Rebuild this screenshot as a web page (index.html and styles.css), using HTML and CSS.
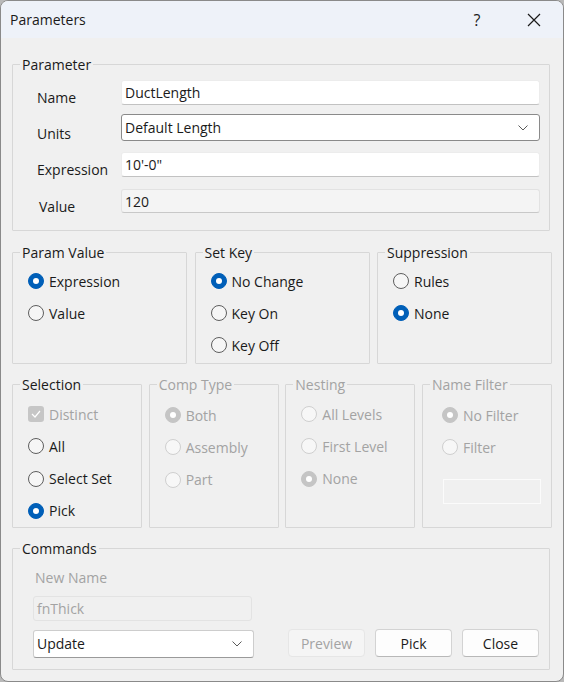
FILE: index.html
```html
<!DOCTYPE html>
<html>
<head>
<meta charset="utf-8">
<link rel="stylesheet" href="styles.css">
</head>
<body>
<div class="window">
  <div class="titlebar">
    <span class="title">Parameters</span>
    <span class="help">?</span>
    <span class="close">
      <svg width="14" height="14" viewBox="0 0 14 14"><path d="M1 1 L13 13 M13 1 L1 13" stroke="#1a1a1a" stroke-width="1.2" fill="none"/></svg>
    </span>
  </div>
  <div class="content">
    <fieldset class="group param">
      <legend>Parameter</legend>
      <div class="form">
        <div class="lbl">Name</div>
        <div class="field h25">DuctLength</div>
        <div class="lbl">Units</div>
        <div class="select h27">Default Length<svg class="chev" width="10" height="6" viewBox="0 0 10 6"><polyline points="0.5,0.5 5,5 9.5,0.5" fill="none" stroke="#5a5a5a" stroke-width="1"/></svg></div>
        <div class="lbl">Expression</div>
        <div class="field h25">10'-0"</div>
        <div class="lbl lbl-value">Value</div>
        <div class="field ro h24">120</div>
      </div>
    </fieldset>

    <div class="row3">
      <fieldset class="group g175">
        <legend>Param Value</legend>
        <div class="opts">
          <div class="opt"><span class="radio on"></span>Expression</div>
          <div class="opt"><span class="radio"></span>Value</div>
        </div>
      </fieldset>
      <fieldset class="group g175">
        <legend>Set Key</legend>
        <div class="opts">
          <div class="opt"><span class="radio on"></span>No Change</div>
          <div class="opt"><span class="radio"></span>Key On</div>
          <div class="opt"><span class="radio"></span>Key Off</div>
        </div>
      </fieldset>
      <fieldset class="group g175">
        <legend>Suppression</legend>
        <div class="opts">
          <div class="opt"><span class="radio"></span>Rules</div>
          <div class="opt"><span class="radio on"></span>None</div>
        </div>
      </fieldset>
    </div>

    <div class="row4">
      <fieldset class="group g130">
        <legend>Selection</legend>
        <div class="opts opts4">
          <div class="opt dis"><span class="check"><svg width="10" height="8" viewBox="0 0 10 8"><polyline points="1,4 4,7 9,1" fill="none" stroke="#fff" stroke-width="1.2"/></svg></span>Distinct</div>
          <div class="opt"><span class="radio"></span>All</div>
          <div class="opt"><span class="radio"></span>Select Set</div>
          <div class="opt"><span class="radio on"></span>Pick</div>
        </div>
      </fieldset>
      <fieldset class="group g130 disabled">
        <legend>Comp Type</legend>
        <div class="opts opts4 down1">
          <div class="opt dis"><span class="radio don"></span>Both</div>
          <div class="opt dis"><span class="radio doff"></span>Assembly</div>
          <div class="opt dis"><span class="radio doff"></span>Part</div>
        </div>
      </fieldset>
      <fieldset class="group g130 disabled">
        <legend>Nesting</legend>
        <div class="opts opts4">
          <div class="opt dis"><span class="radio doff"></span>All Levels</div>
          <div class="opt dis"><span class="radio doff"></span>First Level</div>
          <div class="opt dis"><span class="radio don"></span>None</div>
        </div>
      </fieldset>
      <fieldset class="group g130 disabled nf">
        <legend>Name Filter</legend>
        <div class="opts opts4 down1">
          <div class="opt dis"><span class="radio don"></span>No Filter</div>
          <div class="opt dis"><span class="radio doff"></span>Filter</div>
          <div class="nf-field"></div>
        </div>
      </fieldset>
    </div>

    <fieldset class="group commands">
      <legend>Commands</legend>
      <div class="newname">New Name</div>
      <div class="field dfield">fnThick</div>
      <div class="cmdrow">
        <div class="select sel-update">Update<svg class="chev" width="10" height="6" viewBox="0 0 10 6"><polyline points="0.5,0.5 5,5 9.5,0.5" fill="none" stroke="#5a5a5a" stroke-width="1"/></svg></div>
        <div class="buttons">
          <div class="btn btn-dis">Preview</div>
          <div class="btn">Pick</div>
          <div class="btn">Close</div>
        </div>
      </div>
    </fieldset>
  </div>
</div>
</body>
</html>
```

FILE: styles.css
```css
* { box-sizing: border-box; }
html, body { margin: 0; padding: 0; background: #b9b9b9; }
body {
  font-family: "Open Sans", "Noto Sans", "Liberation Sans", sans-serif;
  font-size: 14px;
  color: #1a1a1a;
}
.window {
  width: 564px;
  height: 682px;
  border: 1px solid #8a8a8a;
  border-radius: 8px;
  overflow: hidden;
  background: #f0f0f0;
  display: flex;
  flex-direction: column;
}
.titlebar {
  height: 37px;
  flex: none;
  background: #eef2f9;
  display: flex;
  align-items: center;
  padding-left: 9px;
}
.title { flex: 1; font-size: 14px; color: #1a1a1a; }
.help { width: 60px; text-align: center; font-size: 16px; color: #1a1a1a; margin-right: 2px; }
.close { width: 54px; display: flex; justify-content: center; align-items: center; padding-right: 4px; }

.content {
  padding: 17px 11px 0 11px;
  display: flex;
  flex-direction: column;
}
.group {
  margin: 0;
  border: 1px solid #d7d7d7;
  border-radius: 1px;
  padding: 0;
  min-width: 0;
}
.group legend {
  padding: 0 2px;
  line-height: 19px;
  font-size: 14px;
  color: #1a1a1a;
}
.group.disabled legend { color: #a3a3a3; }

.param { width: 538px; padding: 6px 9px 17px 24px; }
.param legend { margin-left: -17px; }
.form {
  display: grid;
  grid-template-columns: 84px 1fr;
  grid-template-rows: 25px 36px 36px 36px;
}
.form > :nth-child(3), .form > :nth-child(4) { margin-top: 9px; }
.form > :nth-child(5), .form > :nth-child(6) { margin-top: 11px; }
.form > :nth-child(7), .form > :nth-child(8) { margin-top: 12px; }
.lbl {
  align-self: end;
  line-height: 19px;
  margin-bottom: -2px;
}
.lbl-value { padding-left: 2px; margin-bottom: -3px; }

.field {
  background: #fff;
  border: 1px solid #ececec;
  border-bottom-color: #c2c2c2;
  border-radius: 3px;
  padding: 0 3px;
  display: flex;
  align-items: center;
  line-height: 19px;
  color: #1a1a1a;
}
.h25 { height: 25px; }
.h24 { height: 24px; }
.h27 { height: 27px; }
.field.ro {
  background: #f4f4f4;
  border-color: #e2e2e2;
  border-bottom-color: #c8c8c8;
}
.select {
  background: #fff;
  border: 1px solid #8a8a8a;
  border-radius: 3px;
  padding: 0 11px 0 3px;
  display: flex;
  align-items: center;
  justify-content: space-between;
  line-height: 19px;
}

.row3 {
  margin-top: 12px;
  width: 540px;
  display: flex;
  justify-content: space-between;
  align-items: stretch;
}
.g175 { width: 175px; padding: 9px 4px 8px 15px; }
.g175 legend { margin-left: -8px; }
.opts { display: flex; flex-direction: column; gap: 12px; }
.opt {
  display: flex;
  align-items: center;
  height: 20px;
  line-height: 19px;
  gap: 5px;
  white-space: nowrap;
}
.radio {
  width: 16px;
  height: 16px;
  flex: none;
  border-radius: 50%;
  border: 1px solid #5e5e5e;
  background: #f6f6f6;
  display: flex;
  align-items: center;
  justify-content: center;
}
.radio.on { background: #005fb8; border-color: #005fb8; }
.radio.on::after, .radio.don::after {
  content: "";
  width: 6px;
  height: 6px;
  border-radius: 50%;
  background: #fff;
}
.radio.don { background: #c5c5c5; border-color: #c5c5c5; }
.radio.doff { background: #f7f7f7; border-color: #cfcfcf; }
.check {
  width: 16px;
  height: 16px;
  flex: none;
  border-radius: 3px;
  background: #c6c6c6;
  display: flex;
  align-items: center;
  justify-content: center;
}
.opt.dis { color: #a3a3a3; }

.row4 {
  margin-top: 11px;
  width: 540px;
  display: flex;
  justify-content: space-between;
  align-items: stretch;
}
.g130 { width: 130px; padding: 10px 2px 6px 15px; }
.g130 legend { margin-left: -8px; }
.g130.nf { padding-left: 19px; }
.g130.nf legend { margin-left: -12px; }
.opts4 { gap: 12.33px; }
.down1 { margin-top: 1px; }
.nf-field {
  margin-top: 9px;
  width: 98px;
  height: 25px;
  border: 1px solid #fbfbfb;
  background: #f0f0f0;
  margin-left: 1px;
}

.commands {
  margin-top: 11px;
  width: 538px;
  padding: 10px 10px 11px 20px;
}
.commands legend { margin-left: -13px; }
.newname { line-height: 19px; color: #a3a3a3; padding-left: 2px; }
.dfield {
  margin-top: 9px;
  width: 219px;
  height: 25px;
  background: #f0f0f0;
  border-color: #e3e3e3;
  border-bottom-color: #e3e3e3;
  color: #a3a3a3;
}
.cmdrow {
  margin-top: 8px;
  display: flex;
  align-items: center;
  justify-content: space-between;
}
.sel-update {
  width: 221px;
  height: 28px;
  border-color: #cdcdcd;
  border-bottom-color: #9a9a9a;
  margin-top: 1px;
}
.buttons { display: flex; gap: 10px; }
.btn {
  width: 77px;
  height: 28px;
  background: #fdfdfd;
  border: 1px solid #d3d3d3;
  border-bottom-color: #b8b8b8;
  border-radius: 4px;
  display: flex;
  align-items: center;
  justify-content: center;
  line-height: 19px;
}
.btn-dis {
  background: #f5f5f5;
  border-color: #e6e6e6;
  color: #a3a3a3;
}
```
